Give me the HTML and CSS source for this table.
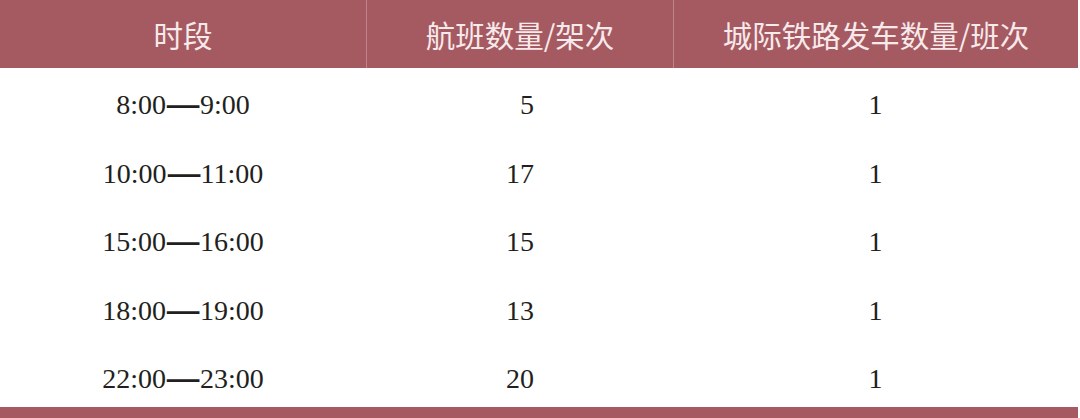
FILE: index.html
```html
<!DOCTYPE html>
<html lang="zh-CN">
<head>
<meta charset="utf-8">
<title>时段 航班数量 城际铁路发车数量</title>
<link rel="stylesheet" href="styles.css">
</head>
<body>
<div class="table">
  <div class="head">
    <div class="hcell">时段</div>
    <div class="hcell sep">航班数量/架次</div>
    <div class="hcell sep">城际铁路发车数量/班次</div>
  </div>
  <div class="body">
    <div class="row">
      <div class="cell c1">8:00<span class="dash">—</span>9:00</div>
      <div class="cell c2">5</div>
      <div class="cell c3">1</div>
    </div>
    <div class="row">
      <div class="cell c1">10:00<span class="dash">—</span>11:00</div>
      <div class="cell c2">17</div>
      <div class="cell c3">1</div>
    </div>
    <div class="row">
      <div class="cell c1">15:00<span class="dash">—</span>16:00</div>
      <div class="cell c2">15</div>
      <div class="cell c3">1</div>
    </div>
    <div class="row">
      <div class="cell c1">18:00<span class="dash">—</span>19:00</div>
      <div class="cell c2">13</div>
      <div class="cell c3">1</div>
    </div>
    <div class="row">
      <div class="cell c1">22:00<span class="dash">—</span>23:00</div>
      <div class="cell c2">20</div>
      <div class="cell c3">1</div>
    </div>
  </div>
  <div class="foot"></div>
</div>
</body>
</html>
```
FILE: styles.css
```css
html, body {
  margin: 0;
  padding: 0;
  background: #ffffff;
  overflow: hidden;
}
.table {
  width: 1078px;
  height: 418px;
  display: flex;
  flex-direction: column;
}
.head {
  height: 68px;
  flex: none;
  background: #a55a62;
  display: grid;
  grid-template-columns: 366px 307px 405px;
}
.hcell {
  display: flex;
  align-items: center;
  justify-content: center;
  color: #f8e9eb;
  font-family: "Noto Sans CJK SC", "Noto Sans", sans-serif;
  font-size: 29.5px;
  font-weight: 400;
  line-height: 1;
  padding-top: 1px;
}
.hcell.sep {
  border-left: 1px solid #bd858b;
}
.body {
  height: 339px;
  flex: none;
  box-sizing: border-box;
  padding-top: 3px;
  overflow: hidden;
}
.row {
  height: 68.5px;
  display: grid;
  grid-template-columns: 366px 307px 405px;
  font-family: "Liberation Serif", "Times New Roman", serif;
  font-size: 28px;
  color: #231f20;
}
.cell {
  line-height: 68.5px;
  white-space: nowrap;
}
.c1 {
  text-align: center;
}
.c2 {
  text-align: right;
  padding-right: 139px;
}
.c3 {
  text-align: center;
}
.dash {
  display: inline-block;
  line-height: 1;
  transform: scale(1.15, 2);
  transform-origin: 50% 60%;
  margin: 0 3px;
}
.foot {
  height: 11px;
  flex: none;
  background: #a55a62;
}
```
